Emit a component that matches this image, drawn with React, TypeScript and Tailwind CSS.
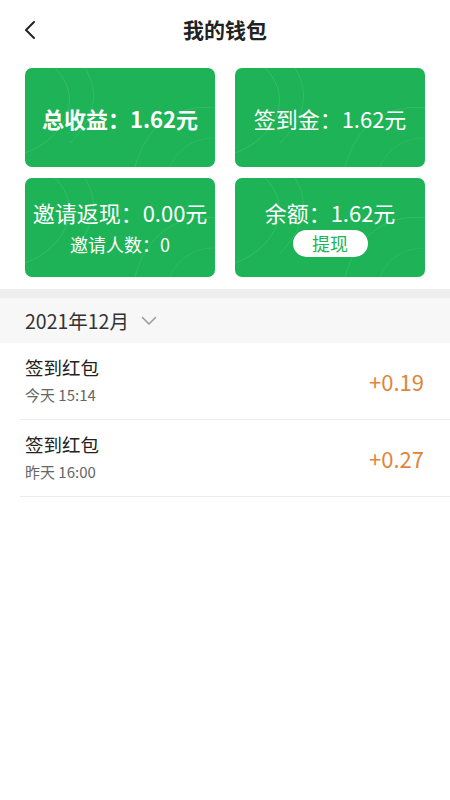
import React from "react";

const Arcs = () => (
  <svg className="absolute inset-0 h-full w-full pointer-events-none" viewBox="0 0 190 99" preserveAspectRatio="none" fill="none">
    <path d="M30 0 C 60 30, 40 70, 0 85" stroke="rgba(255,255,255,0.12)" strokeWidth="1" />
    <path d="M60 0 C 75 25, 70 50, 45 75" stroke="rgba(255,255,255,0.10)" strokeWidth="1" />
    <path d="M190 40 C 150 35, 120 60, 110 99" stroke="rgba(255,255,255,0.10)" strokeWidth="1" />
    <path d="M190 70 C 165 70, 150 85, 145 99" stroke="rgba(255,255,255,0.08)" strokeWidth="1" />
  </svg>
);

const Card = ({ children }: { children: React.ReactNode }) => (
  <div className="relative h-[99px] overflow-hidden rounded-[7px] bg-[#1db356] flex flex-col items-center justify-center text-white">
    <Arcs />
    <div className="relative flex flex-col items-center">{children}</div>
  </div>
);

const Row = ({ title, time, amount }: { title: string; time: string; amount: string }) => (
  <div className="ml-[20px] flex h-[77px] items-center justify-between border-b border-[#ececec] pl-[5px] pr-[26px]">
    <div className="mt-[-3px] flex flex-col">
      <span className="text-[18.5px] leading-[26px] text-[#222]">{title}</span>
      <span className="mt-[5px] text-[15px] leading-[20px] text-[#666]">{time}</span>
    </div>
    <span className="mt-[1px] text-[22px] text-[#e0853a]">{amount}</span>
  </div>
);

export default function App() {
  return (
    <div className="min-h-[800px] w-[450px] bg-white" style={{ fontFamily: '"Noto Sans CJK SC", "Noto Sans", sans-serif' }}>
      <div className="relative flex h-[60px] items-center justify-center">
        <svg className="absolute left-[23px] top-[20px]" width="14" height="20" viewBox="0 0 14 20" fill="none">
          <path d="M11 2 L3 10 L11 18" stroke="#222" strokeWidth="2" strokeLinecap="round" strokeLinejoin="round" />
        </svg>
        <span className="text-[21px] font-bold text-[#222]">我的钱包</span>
      </div>
      <div className="mt-[8px] grid grid-cols-2 gap-x-[20px] gap-y-[11px] px-[25px]">
        <Card>
          <span className="text-[22px] font-bold leading-[30px]">总收益：1.62元</span>
        </Card>
        <Card>
          <span className="text-[22px] leading-[30px]">签到金：1.62元</span>
        </Card>
        <Card>
          <span className="mt-[-2px] text-[22px] leading-[30px]">邀请返现：0.00元</span>
          <span className="mt-[5px] text-[18px] leading-[24px]">邀请人数：0</span>
        </Card>
        <Card>
          <span className="mt-[-2px] text-[22px] leading-[30px]">余额：1.62元</span>
          <button className="mt-[3px] flex h-[27px] w-[75px] items-center justify-center rounded-full bg-white text-[18px] text-[#1db356]">提现</button>
        </Card>
      </div>
      <div className="mt-[12px] h-[9px] bg-[#eeeeee]" />
      <div className="flex h-[45px] items-center bg-[#f7f7f7] pl-[25px]">
        <span className="text-[19.5px] text-[#333]">2021年12月</span>
        <svg className="ml-[12px]" width="16" height="10" viewBox="0 0 16 10" fill="none">
          <path d="M1.5 1.5 L8 8 L14.5 1.5" stroke="#999" strokeWidth="1.5" strokeLinecap="round" strokeLinejoin="round" />
        </svg>
      </div>
      <Row title="签到红包" time="今天 15:14" amount="+0.19" />
      <Row title="签到红包" time="昨天 16:00" amount="+0.27" />
    </div>
  );
}
